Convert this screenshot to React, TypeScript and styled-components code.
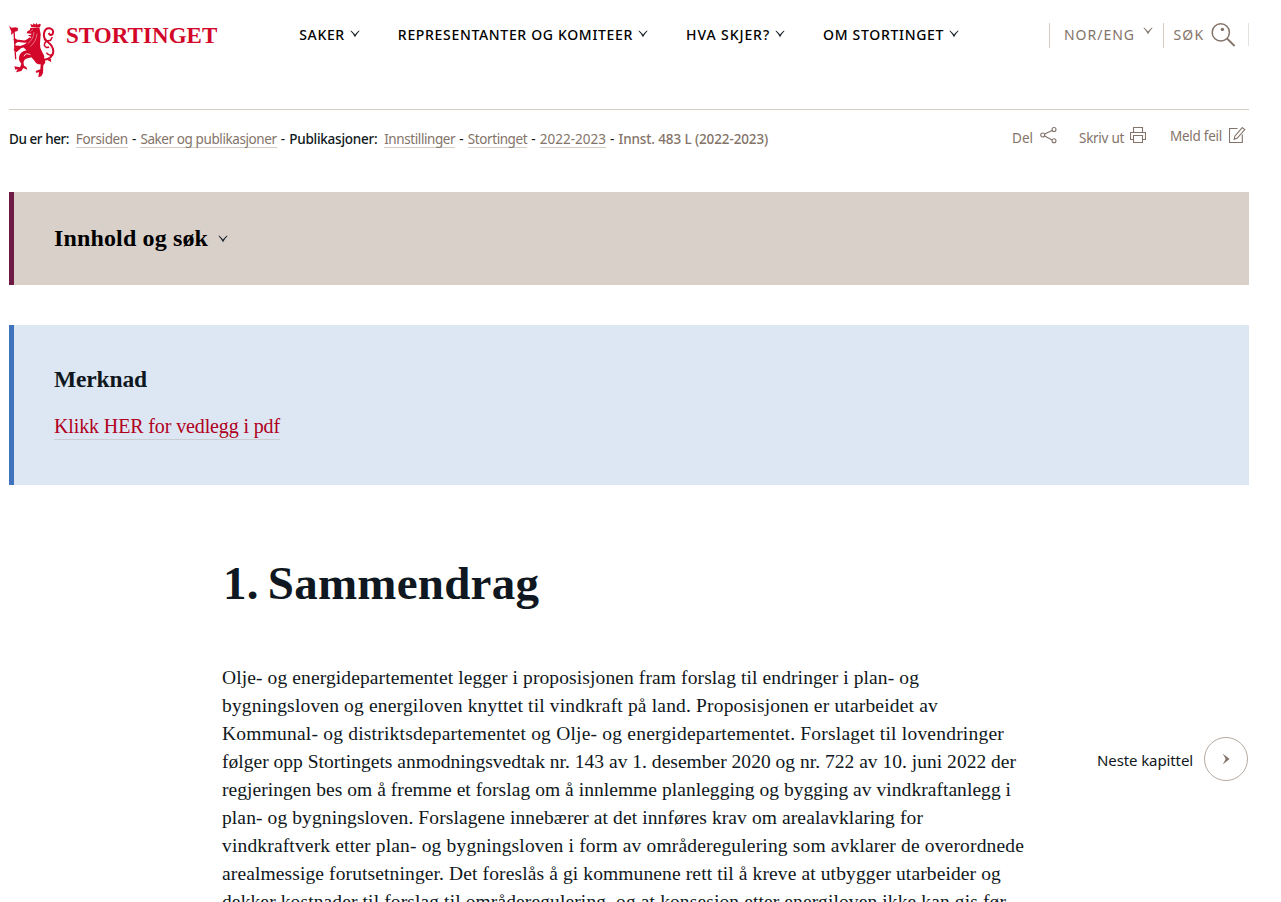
import React from 'react';
import styled, { createGlobalStyle } from 'styled-components';

const sans = '"Noto Sans", "Open Sans", sans-serif';
const serif = '"Liberation Serif", "Times New Roman", serif';
const ink = '#0f1720';
const taupe = '#837369';
const rule = '#d3cdc4';

const GlobalStyle = createGlobalStyle`
  * { box-sizing: border-box; }
  html, body { margin: 0; background: #fff; color: ${ink}; overflow: hidden; }
  body { font-family: ${sans}; }
`;

const Page = styled.div`
  width: 1240px;
  height: 902px;
  margin-left: 9px;
  overflow: hidden;
  white-space: nowrap;
`;

const Header = styled.header`
  display: flex;
  align-items: flex-start;
  height: 110px;
  padding-top: 21px;
  border-bottom: 1px solid ${rule};
`;

const Logo = styled.a`
  display: flex;
  align-items: flex-start;
  width: 290px;
  margin-left: -1px;
  color: #d2072a;
`;

const Wordmark = styled.span`
  margin-left: 10px;
  padding-top: 1px;
  font: bold 23px/28px ${serif};
  letter-spacing: 0.05px;
`;

const Nav = styled.nav`
  display: flex;
  gap: 38px;
  padding-top: 4px;
  margin-left: 1.2px;
`;

const NavItem = styled.a<{ $tracking: number }>`
  display: flex;
  align-items: center;
  gap: 5px;
  font: 500 14px/20px ${sans};
  letter-spacing: ${(p) => p.$tracking}px;
  color: #000;
  svg { margin-top: -3px; }
`;

const Tools = styled.div`
  display: flex;
  align-items: flex-start;
  margin-left: auto;
  margin-top: 2px;
`;

const Tool = styled.a<{ $tracking: number; $width: number; $pad: number; $gap: number }>`
  display: flex;
  align-items: flex-start;
  gap: ${(p) => p.$gap}px;
  width: ${(p) => p.$width}px;
  height: 25px;
  padding-left: ${(p) => p.$pad}px;
  border-left: 1px solid ${rule};
  font: 14px/24px ${sans};
  letter-spacing: ${(p) => p.$tracking}px;
  color: ${taupe};
`;

const ToolsEnd = styled.div`
  width: 1px;
  height: 23px;
  background: #e4e0db;
`;

const MetaBar = styled.div`
  display: flex;
  justify-content: space-between;
  height: 82px;
  padding-top: 16px;
`;

const Crumbs = styled.nav`
  display: flex;
  padding-top: 4px;
  font: 13.5px/19px ${sans};
`;

const Crumb = styled.span<{ $tracking?: number; $kind?: 'label' | 'link' | 'current' }>`
  height: 18px;
  letter-spacing: ${(p) => p.$tracking ?? 0}px;
  font-weight: ${(p) => (p.$kind === 'link' ? 400 : 500)};
  color: ${(p) => (p.$kind === 'link' || p.$kind === 'current' ? taupe : ink)};
  border-bottom: ${(p) => (p.$kind === 'link' ? `1px solid ${rule}` : '0')};
  margin-right: ${(p) => (p.$kind === 'label' ? 6.8 : 0)}px;
`;

const Dash = styled.span`
  width: 12.6px;
  text-align: center;
`;

const Actions = styled.div`
  display: flex;
  padding-right: 3px;
`;

const Action = styled.a<{ $tracking: number; $gap: number; $drop: number; $after: number }>`
  display: flex;
  gap: ${(p) => p.$gap}px;
  margin-right: ${(p) => p.$after}px;
  font: 13.5px/18px ${sans};
  letter-spacing: ${(p) => p.$tracking}px;
  color: ${taupe};
  span { padding-top: ${(p) => p.$drop}px; }
`;

const Panel = styled.section<{ $accent: string; $fill: string; $height: number }>`
  display: flex;
  flex-direction: column;
  height: ${(p) => p.$height}px;
  margin-bottom: 40px;
  padding-left: 40px;
  border-left: 5px solid ${(p) => p.$accent};
  background: ${(p) => p.$fill};
`;

const PanelToggle = styled.h2`
  display: flex;
  align-items: center;
  gap: 10px;
  height: 93px;
  margin: 0;
  padding-bottom: 1px;
  font: bold 24px/30px ${serif};
  letter-spacing: 0.14px;
  color: #000;
`;

const PanelTitle = styled.h2`
  margin: 39px 0 19px;
  font: bold 23.5px/30px ${serif};
  letter-spacing: -0.14px;
`;

const PanelLink = styled.a`
  align-self: flex-start;
  height: 27px;
  font: 20px/26px ${serif};
  letter-spacing: -0.125px;
  color: #b00020;
  border-bottom: 1px solid #c9ccd0;
`;

const Content = styled.main`
  display: flex;
  justify-content: space-between;
  padding: 28px 1px 0 213px;
`;

const Title = styled.h1`
  margin: 0 0 51px 1px;
  font: bold 47px/60px ${serif};
  letter-spacing: 0.25px;
  word-spacing: -3px;
`;

const Line = styled.span<{ $tracking: number }>`
  display: block;
  font: 19.5px/28px ${serif};
  letter-spacing: ${(p) => p.$tracking}px;
`;

const NextChapter = styled.a`
  display: flex;
  align-items: center;
  gap: 11px;
  height: 44px;
  margin-top: 184px;
  font: 15px/20px ${sans};
  letter-spacing: -0.11px;
  color: ${ink};
  span { padding-top: 1px; }
`;

const Round = styled.i`
  display: flex;
  align-items: center;
  justify-content: center;
  width: 44px;
  height: 44px;
  border: 1px solid #b5aaa1;
  border-radius: 50%;
`;

const ChevronSvg = styled.svg<{ $drop?: number }>`
  display: block;
  margin-top: ${(p) => p.$drop ?? 0}px;
`;

const Chevron = ({ color = '#1b222b', drop }: { color?: string; drop?: number }) => (
  <ChevronSvg $drop={drop} width="10" height="8" viewBox="0 0 10 8" fill={color}>
    <path d="M.3.8L1.4.8Q3.2 2.4 5 4.5Q6.8 2.4 8.6.8L9.7.8Q7 3.6 5 7.2Q3 3.6.3.8Z" />
  </ChevronSvg>
);

const Lion = () => (
  <svg width="48" height="57" viewBox="24 18 144 171" fill="none" stroke="currentColor">
    <path fill="currentColor" stroke="none" d="M27 32l7 6 14-1 6 3-1 8-9 2-5 5-6 5 1-10-3-7z" />
    <path d="M42 47L47 133" strokeWidth="4" />
    <path fill="currentColor" stroke="none" d="M94 36l-3-10 7 4 3-5 5 4 3-5 4 5 6-3 4 3-4 8z" />
    <path fill="currentColor" stroke="none" d="M91 39L118 37L122 58L120 86Q119 101 127 112L133 124Q131 137 120 139L107 134Q86 118 78 104L69 96L80 82Q88 72 94 66L83 61L93 59L95 56L80 55L83 48L89 46Z" />
    <path d="M91 69Q84 79 74 80L50 77L42 72M51 78L43 84M76 91L58 98L42 105M59 96L43 95M60 98L47 109" strokeWidth="7" />
    <path d="M102 51Q101 73 83 86M111 56Q109 80 91 94M99 43L91 50" stroke="#fff" strokeWidth="1.3" />
    <path fill="currentColor" stroke="none" d="M79 106Q59 111 57 127Q55 137 64 146L60 157L43 154L46 164L53 162L48 172L64 168L70 159L82 164L79 156L72 152L71 146Q69 137 78 131L94 127L104 138Q109 149 122 148L121 163L107 168L109 174L117 171L115 187L124 184L129 174L130 151L136 143L133 128L108 114Z" />
    <path d="M72 124Q76 112 91 119" stroke="#fff" strokeWidth="2.5" />
    <path d="M127 136Q159 131 160 110Q160 94 146 83Q129 72 132 55Q135 38 150 40Q163 44 158 57Q151 64 146 54" strokeWidth="6" />
    <path d="M153 76Q133 77 133 91Q137 101 147 96M157 66L151 77M157 119Q150 125 139 113M142 132L151 137L151 131M142 78L132 73" strokeWidth="4.5" />
  </svg>
);

const SearchIcon = () => (
  <svg width="25" height="25" viewBox="0 0 25 25" fill="none" stroke={taupe} strokeWidth="1.5">
    <circle cx="9.8" cy="9.4" r="8.6" />
    <path d="M16 15.5L23.6 23" strokeWidth="1.8" />
    <circle cx="11.4" cy="6.4" r="1.7" fill={taupe} stroke="none" />
  </svg>
);

const ShareIcon = () => (
  <svg width="17" height="18" viewBox="0 0 17 18" fill="none" stroke={taupe} strokeWidth="1.1">
    <circle cx="2.7" cy="9" r="2" />
    <circle cx="14" cy="3.5" r="2" />
    <circle cx="14" cy="14.8" r="2" />
    <path d="M4.6 8.1L12.1 4.4M4.6 10L12.1 13.9" />
  </svg>
);

const PrintIcon = () => (
  <svg width="16" height="18" viewBox="0 0 16 18" fill="none" stroke={taupe} strokeWidth="1.1">
    <path d="M3.5 6V1.5h9V6M3.5 13.5h-3v-7h15v7h-3M3.5 9.5h9v7h-9z" />
  </svg>
);

const EditIcon = () => (
  <svg width="17" height="18" viewBox="0 0 17 18" fill="none" stroke={taupe} strokeWidth="1.1">
    <path d="M8.5 2.5h-8v14h12.8v-8" />
    <path d="M13.3 1.6L15.8 3.5L8.3 12.1L5.2 13.3L5.8 10.2Z" />
  </svg>
);

const navItems: [string, number][] = [
  ['SAKER', 0.66],
  ['REPRESENTANTER OG KOMITEER', 0.67],
  ['HVA SKJER?', 0.92],
  ['OM STORTINGET', 0.69],
];

const paragraph: [string, number][] = [
  ['Olje- og energidepartementet legger i proposisjonen fram forslag til endringer i plan- og', 0.109],
  ['bygningsloven og energiloven knyttet til vindkraft på land. Proposisjonen er utarbeidet av', 0.172],
  ['Kommunal- og distriktsdepartementet og Olje- og energidepartementet. Forslaget til lovendringer', 0.209],
  ['følger opp Stortingets anmodningsvedtak nr. 143 av 1. desember 2020 og nr. 722 av 10. juni 2022 der', 0.017],
  ['regjeringen bes om å fremme et forslag om å innlemme planlegging og bygging av vindkraftanlegg i', 0.046],
  ['plan- og bygningsloven. Forslagene innebærer at det innføres krav om arealavklaring for', 0.103],
  ['vindkraftverk etter plan- og bygningsloven i form av områderegulering som avklarer de overordnede', 0.163],
  ['arealmessige forutsetninger. Det foreslås å gi kommunene rett til å kreve at utbygger utarbeider og', 0.118],
  ['dekker kostnader til forslag til områderegulering, og at konsesjon etter energiloven ikke kan gis før', 0.115],
];

export default function App() {
  return (
    <Page>
      <GlobalStyle />
      <Header>
        <Logo>
          <Lion />
          <Wordmark>STORTINGET</Wordmark>
        </Logo>
        <Nav>
          {navItems.map(([label, tracking]) => (
            <NavItem key={label} $tracking={tracking}>
              {label}
              <Chevron />
            </NavItem>
          ))}
        </Nav>
        <Tools>
          <Tool $width={114} $pad={14} $gap={8} $tracking={0.98}>
            <span>NOR/ENG</span>
            <Chevron color={taupe} drop={4} />
          </Tool>
          <Tool $width={85} $pad={9.4} $gap={7} $tracking={1.2}>
            <span>SØK</span>
            <SearchIcon />
          </Tool>
          <ToolsEnd />
        </Tools>
      </Header>

      <MetaBar>
        <Crumbs>
          <Crumb $kind="label" $tracking={-0.44}>Du er her:</Crumb>
          <Crumb $kind="link" $tracking={-0.37}>Forsiden</Crumb>
          <Dash>-</Dash>
          <Crumb $kind="link" $tracking={-0.41}>Saker og publikasjoner</Crumb>
          <Dash>-</Dash>
          <Crumb $kind="label" $tracking={-0.25}>Publikasjoner:</Crumb>
          <Crumb $kind="link" $tracking={-0.41}>Innstillinger</Crumb>
          <Dash>-</Dash>
          <Crumb $kind="link" $tracking={-0.42}>Stortinget</Crumb>
          <Dash>-</Dash>
          <Crumb $kind="link">2022-2023</Crumb>
          <Dash>-</Dash>
          <Crumb $kind="current" $tracking={-0.12}>Innst. 483 L (2022-2023)</Crumb>
        </Crumbs>
        <Actions>
          <Action $tracking={0} $gap={7} $drop={3} $after={22}>
            <span>Del</span>
            <ShareIcon />
          </Action>
          <Action $tracking={-0.28} $gap={6} $drop={3} $after={24}>
            <span>Skriv ut</span>
            <PrintIcon />
          </Action>
          <Action $tracking={-0.27} $gap={7} $drop={1} $after={0}>
            <span>Meld feil</span>
            <EditIcon />
          </Action>
        </Actions>
      </MetaBar>

      <Panel $accent="#6f1a45" $fill="#d8d0c9" $height={93}>
        <PanelToggle>
          Innhold og søk
          <Chevron drop={1} />
        </PanelToggle>
      </Panel>

      <Panel $accent="#3f74bd" $fill="#dde7f3" $height={160}>
        <PanelTitle>Merknad</PanelTitle>
        <PanelLink>Klikk HER for vedlegg i pdf</PanelLink>
      </Panel>

      <Content>
        <article>
          <Title>1. Sammendrag</Title>
          {paragraph.map(([text, tracking]) => (
            <Line key={text} $tracking={tracking}>{text}</Line>
          ))}
        </article>
        <NextChapter>
          <span>Neste kapittel</span>
          <Round>
            <svg width="8" height="12" viewBox="0 0 8 12" fill={taupe}>
              <path d="M.6.4Q4.4 3.4 7.6 6Q4.4 8.6 .6 11.6Q2.8 8 3.6 6Q2.8 4 .6.4Z" />
            </svg>
          </Round>
        </NextChapter>
      </Content>
    </Page>
  );
}
